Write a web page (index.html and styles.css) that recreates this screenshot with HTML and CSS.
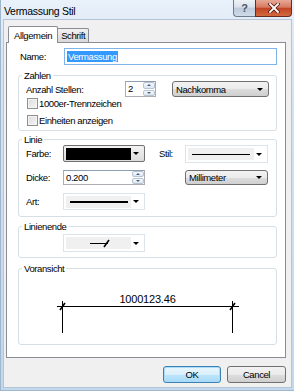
FILE: index.html
```html
<!DOCTYPE html>
<html>
  <head>
    <meta charset='UTF-8'>
    <title>Vermassung Stil</title>
    <link rel="stylesheet" href="styles.css">
  </head>
  <body>
    <div class='window'>
      <div class='titlebar'>
        <div class='titlebar__text'>Vermassung Stil</div>
        <div class='titlebar__btns'>
          <div class='tb-btn tb-btn--help'>?</div>
          <div class='tb-btn tb-btn--close'>
            <svg width='12' height='10' viewBox='0 0 12 10'>
              <path d='M2 1 L10 9 M10 1 L2 9' stroke='#5a1a10' stroke-width='3.4' stroke-linecap='square'/>
              <path d='M2 1 L10 9 M10 1 L2 9' stroke='#fff' stroke-width='1.8' stroke-linecap='square'/>
            </svg>
          </div>
        </div>
      </div>

      <div class='client'>
        <div class='tabs'>
          <div class='tab tab--active'>Allgemein</div>
          <div class='tab'>Schrift</div>
        </div>

        <div class='page'>
          <div class='name-row'>
            <div class='name-row__label'>Name:</div>
            <div class='edit edit--name'><span class='edit__sel'>Vermassung</span></div>
          </div>

          <fieldset class='group group--zahlen'>
            <legend>Zahlen</legend>
            <div class='zahlen__row'>
              <div class='zahlen__label'>Anzahl Stellen:</div>
              <div class='spin spin--stellen'>
                <div class='spin__edit'>2</div>
                <div class='spin__btns'>
                  <div class='spin__btn'><span class='arr arr--up'></span></div>
                  <div class='spin__btn'><span class='arr arr--down'></span></div>
                </div>
              </div>
              <div class='combo combo--nachkomma'>Nachkomma<span class='combo__arrow'></span></div>
            </div>
            <div class='check'><span class='check__box'></span>1000er-Trennzeichen</div>
            <div class='check'><span class='check__box'></span>Einheiten anzeigen</div>
          </fieldset>

          <fieldset class='group group--linie'>
            <legend>Linie</legend>
            <div class='linie__grid'>
              <div class='linie__label linie__label--farbe'>Farbe:</div>
              <div class='pick pick--color'>
                <span class='pick__swatch'></span>
                <span class='combo__arrow'></span>
              </div>
              <div class='linie__label linie__label--stil'>Stil:</div>
              <div class='pick pick--flat pick--stil'>
                <span class='pick__inner'><span class='pick__line'></span></span>
                <span class='combo__arrow'></span>
              </div>

              <div class='linie__label linie__label--dicke'>Dicke:</div>
              <div class='spin spin--dicke'>
                <div class='spin__edit'>0.200</div>
                <div class='spin__btns'>
                  <div class='spin__btn'><span class='arr arr--up'></span></div>
                  <div class='spin__btn'><span class='arr arr--down'></span></div>
                </div>
              </div>
              <div class='combo combo--mm'>Millimeter<span class='combo__arrow'></span></div>

              <div class='linie__label linie__label--art'>Art:</div>
              <div class='pick pick--flat pick--art'>
                <span class='pick__inner'><span class='pick__line pick__line--thick'></span></span>
                <span class='combo__arrow'></span>
              </div>
            </div>
          </fieldset>

          <fieldset class='group group--ende'>
            <legend>Linienende</legend>
            <div class='ende__row'>
              <div class='pick pick--flat pick--ende'>
                <span class='pick__inner'>
                  <svg width='30' height='10' viewBox='0 0 30 10'>
                    <path d='M6 5.5 H24' stroke='#000' stroke-width='1'/>
                    <path d='M20 9 L25 2' stroke='#000' stroke-width='1.6'/>
                  </svg>
                </span>
                <span class='combo__arrow'></span>
              </div>
            </div>
          </fieldset>

          <fieldset class='group group--vorschau'>
            <legend>Voransicht</legend>
            <div class='vorschau'>
              <div class='vorschau__value'>1000123.46</div>
              <svg class='vorschau__dim' width='182' height='33' viewBox='0 0 182 33'>
                <path d='M0 6.5 H182' stroke='#000' stroke-width='1'/>
                <path d='M5.5 1 V33' stroke='#000' stroke-width='1'/>
                <path d='M175.5 1 V33' stroke='#000' stroke-width='1'/>
                <path d='M3 10 L8 3' stroke='#000' stroke-width='1.6'/>
                <path d='M173 10 L178 3' stroke='#000' stroke-width='1.6'/>
              </svg>
            </div>
          </fieldset>
        </div>

        <div class='buttons'>
          <div class='btn btn--default'>OK</div>
          <div class='btn'>Cancel</div>
        </div>
      </div>
    </div>
  </body>
</html>
```

FILE: styles.css
```css
html, body {
  margin: 0;
  font-family: 'Liberation Sans', Arial, sans-serif;
  font-size: 9.5px;
  letter-spacing: -0.4px;
  color: #000;
}

.window {
  width: 294px;
  height: 391px;
  box-sizing: border-box;
  background: linear-gradient(to bottom, #e9f1fa 0px, #d6e4f3 60px, #c3d7ed 391px);
  border-left: 1px solid #9fb6cf;
  border-bottom: 1px solid #9fb6cf;
  display: flex;
  flex-direction: column;
}

/* title bar */
.titlebar {
  height: 19px;
  display: flex;
  align-items: flex-start;
  justify-content: space-between;
}

.titlebar__text {
  padding: 5px 0 0 3px;
  font-size: 10.5px;
  letter-spacing: -0.3px;
  color: #000;
}

.titlebar__btns {
  display: flex;
  margin-right: 2px;
}

.tb-btn {
  height: 17px;
  box-sizing: border-box;
  border: 1px solid #6d7a8c;
  border-top: none;
  display: flex;
  align-items: center;
  justify-content: center;
}

.tb-btn--help {
  width: 22px;
  border-right: none;
  border-bottom-left-radius: 4px;
  background: linear-gradient(to bottom, #eef2f7 0%, #d9e1ea 45%, #bccadb 50%, #cfdbe8 100%);
  color: #4a5566;
  font-size: 11px;
  font-weight: bold;
  letter-spacing: 0;
}

.tb-btn--close {
  width: 37px;
  border-color: #6b2a20;
  border-bottom-right-radius: 4px;
  background: linear-gradient(to bottom, #e7a996 0%, #d77a62 45%, #c14425 52%, #d26a3f 100%);
}

/* client area */
.client {
  flex: 1;
  margin: 0 2px 2px 2px;
  background: #f0f0f0;
  border: 1px solid #b5c4d6;
  padding: 6px 5px 0 2px;
  display: flex;
  flex-direction: column;
}

.tabs {
  display: flex;
  align-items: flex-end;
  height: 16px;
  padding-left: 2px;
}

.tab {
  height: 14px;
  box-sizing: border-box;
  padding: 0 3px;
  border: 1px solid #898c95;
  border-bottom: none;
  border-radius: 2px 2px 0 0;
  background: linear-gradient(to bottom, #f2f2f2, #e3e3e3 50%, #d9d9d9);
  line-height: 13px;
  margin-left: -1px;
}

.tab--active {
  position: relative;
  z-index: 1;
  height: 17px;
  margin-bottom: -1px;
  margin-left: 0;
  padding: 2px 5px 0 5px;
  background: #fff;
}

.page {
  height: 316px;
  box-sizing: border-box;
  border: 1px solid #898c95;
  background: #fff;
  padding: 5px 8px 0 11px;
}

.name-row {
  display: flex;
  align-items: center;
  height: 17px;
}

.name-row__label {
  width: 44px;
  padding-left: 2px;
}

.edit {
  box-sizing: border-box;
  border: 1px solid #abadb3;
  background: #fff;
}

.edit--name {
  flex: 1;
  height: 17px;
  border-color: #7eb4ea;
  padding: 1px 0 0 2px;
  line-height: 13px;
}

.edit__sel {
  background: #3399ff;
  color: #fff;
  padding: 0 1px;
}

/* group boxes */
.group {
  margin: 0;
  padding: 0 7px;
  border: 1px solid #d5dfe5;
  border-radius: 3px;
  min-width: 0;
  box-sizing: border-box;
}

.group legend {
  padding: 0 2px;
  margin-left: -4px;
  line-height: 11px;
  color: #000;
}

.group--zahlen {
  margin-top: 5px;
  height: 61px;
}

.zahlen__row {
  display: flex;
  align-items: center;
  height: 16px;
}

.zahlen__label {
  width: 99px;
}

.spin {
  display: flex;
  box-sizing: border-box;
  border: 1px solid #abadb3;
  border-top-color: #8e9fb3;
  background: #fff;
}

.spin__edit {
  flex: 1;
  padding: 1px 0 0 2px;
  line-height: 12px;
}

.spin__btns {
  width: 12px;
  display: flex;
  flex-direction: column;
  gap: 1px;
}

.spin__btn {
  flex: 1;
  border: 1px solid #b7c3d1;
  border-radius: 2px;
  background: linear-gradient(to bottom, #f4f8fc, #dde7f2);
  display: flex;
  align-items: center;
  justify-content: center;
}

.arr {
  width: 0;
  height: 0;
  border-left: 2px solid transparent;
  border-right: 2px solid transparent;
}

.arr--up {
  border-bottom: 2px solid #4d6185;
}

.arr--down {
  border-top: 2px solid #4d6185;
}

.spin--stellen {
  width: 31px;
  height: 16px;
}

.combo {
  box-sizing: border-box;
  border: 1px solid #707070;
  border-radius: 3px;
  background: linear-gradient(to bottom, #f2f2f2 0%, #ebebeb 50%, #dddddd 51%, #cfcfcf 100%);
  padding: 0 0 0 3px;
  line-height: 13px;
  display: flex;
  align-items: center;
  justify-content: space-between;
}

.combo__arrow {
  width: 0;
  height: 0;
  margin-right: 5px;
  border-left: 3px solid transparent;
  border-right: 3px solid transparent;
  border-top: 3px solid #000;
}

.combo--nachkomma {
  width: 97px;
  height: 16px;
  margin-left: 16px;
}

.check {
  display: flex;
  align-items: center;
  height: 12px;
  margin-top: 5px;
  padding-left: 1px;
}

.zahlen__row + .check {
  margin-top: 0;
}

.check__box {
  width: 11px;
  height: 11px;
  box-sizing: border-box;
  border: 1px solid #8e8f8f;
  background: linear-gradient(135deg, #dcdcdc, #f5f5f5);
  box-shadow: inset 0 0 0 1px #f4f4f4;
  margin-right: 1px;
}

/* Linie */
.group--linie {
  margin-top: 3px;
  height: 83px;
}

.linie__grid {
  display: grid;
  grid-template-columns: 37px 82px 14px 26px 83px;
  grid-template-rows: 17px 15px 17px;
  row-gap: 8px;
}

.linie__label {
  align-self: center;
  grid-column: 1;
}

.linie__label--farbe { grid-row: 1; }
.linie__label--dicke { grid-row: 2; }
.linie__label--art { grid-row: 3; }

.linie__label--stil {
  grid-column: 4;
  grid-row: 1;
}

.pick {
  height: 17px;
  box-sizing: border-box;
  display: flex;
  align-items: center;
  justify-content: space-between;
}

.pick--color {
  grid-column: 2;
  grid-row: 1;
  border: 1px solid #707070;
  border-radius: 2px;
  background: linear-gradient(to bottom, #f2f2f2, #dcdcdc);
  padding-left: 2px;
}

.pick__swatch {
  width: 65px;
  height: 12px;
  background: #000;
}

.pick--flat {
  border: 1px solid #dde3ea;
  background: #fff;
  padding-left: 2px;
}

.pick__inner {
  width: 65px;
  height: 12px;
  background: #f0f0f0;
  display: flex;
  align-items: center;
  justify-content: center;
}

.pick__line {
  width: 58px;
  height: 1px;
  background: #000;
}

.pick__line--thick {
  height: 2px;
}

.pick--stil {
  grid-column: 5;
  grid-row: 1;
  height: 18px;
}

.pick--stil .pick__inner {
  width: 66px;
}

.pick--art {
  grid-column: 2;
  grid-row: 3;
}

.spin--dicke {
  grid-column: 2;
  grid-row: 2;
  height: 15px;
}

.combo--mm {
  grid-column: 5;
  grid-row: 2;
  height: 15px;
}

/* Linienende */
.group--ende {
  margin-top: 4px;
  height: 37px;
}

.ende__row {
  padding: 2px 0 0 37px;
}

.pick--ende {
  width: 82px;
  height: 18px;
}

/* Voransicht */
.group--vorschau {
  margin-top: 5px;
  height: 82px;
}

.vorschau {
  display: flex;
  flex-direction: column;
  align-items: center;
  padding-top: 19px;
}

.vorschau__value {
  font-size: 11px;
  letter-spacing: -0.2px;
  line-height: 12px;
  margin-bottom: -5px;
}

/* buttons */
.buttons {
  display: flex;
  justify-content: flex-end;
  gap: 6px;
  margin-top: 8px;
}

.btn {
  width: 59px;
  height: 17px;
  box-sizing: border-box;
  border: 1px solid #707070;
  border-radius: 3px;
  background: linear-gradient(to bottom, #f2f2f2 0%, #ebebeb 50%, #dddddd 51%, #cfcfcf 100%);
  text-align: center;
  line-height: 15px;
}

.btn--default {
  width: 58px;
  border-color: #3c7fb1;
  box-shadow: inset 0 0 0 1px #a8dcfa;
  background: linear-gradient(to bottom, #eaf6fd 0%, #d9f0fc 50%, #bee6fd 51%, #a7d9f5 100%);
}
```
